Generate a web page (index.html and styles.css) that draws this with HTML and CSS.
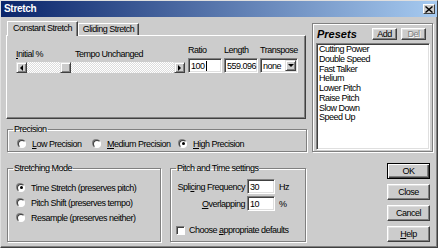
FILE: index.html
```html
<!DOCTYPE html>
<html lang="en">
<head>
	<meta charset="utf-8">
	<title>Stretch</title>
	<link rel="stylesheet" href="styles.css">
</head>
<body>

<!-- dialog window -->
<div class="window">
  <div class="titlebar">
    <span class="title">Stretch</span>
    <span class="close">
      <svg width="8" height="7" viewBox="0 0 8 7"><path d="M0.5 0.5 L7.5 6.5 M7.5 0.5 L0.5 6.5" stroke="#000" stroke-width="1.4" fill="none"/></svg>
    </span>
  </div>

  <div class="content">

    <!-- left column: tabs and precision -->
    <div class="left">
      <div class="tabs">
        <div class="tab active">Constant Stretch</div>
        <div class="tab">Gliding Stretch</div>
      </div>
      <div class="tabpanel">
        <div class="slider-block">
          <div class="slider-labels">
            <span class="initial"><u>I</u>nitial %</span>
            <span>Tempo Unchanged</span>
          </div>
          <div class="slider">
            <span class="sbtn"><i class="arrow arrow-left"></i></span>
            <span class="track"><span class="thumb"></span></span>
            <span class="sbtn"><i class="arrow arrow-right"></i></span>
          </div>
        </div>
        <div class="field field-ratio">
          <div class="field-label">Ratio</div>
          <div class="edit">100<span class="caret"></span></div>
        </div>
        <div class="field field-length">
          <div class="field-label">Length</div>
          <div class="edit">559.096</div>
        </div>
        <div class="field field-transpose">
          <div class="field-label">Transpose</div>
          <div class="edit combo">none<span class="combo-btn"><i class="arrow arrow-down"></i></span></div>
        </div>
      </div>

      <fieldset class="group precision">
        <legend>Precision</legend>
        <div class="radio-row">
          <span class="option opt-low"><span class="radio"></span><span><u>L</u>ow Precision</span></span>
          <span class="option opt-medium"><span class="radio"></span><span><u>M</u>edium Precision</span></span>
          <span class="option"><span class="radio checked"></span><span><u>H</u>igh Precision</span></span>
        </div>
      </fieldset>
    </div>

    <!-- right column: presets -->
    <div class="presets">
      <div class="presets-head">
        <span class="presets-title">Presets</span>
        <span class="btn small">Add</span>
        <span class="btn small disabled">Del</span>
      </div>
      <div class="listbox">
        <div>Cutting Power</div>
        <div>Double Speed</div>
        <div>Fast Talker</div>
        <div>Helium</div>
        <div>Lower Pitch</div>
        <div>Raise Pitch</div>
        <div>Slow Down</div>
        <div>Speed Up</div>
      </div>
    </div>

    <!-- bottom groups -->
    <div class="bottom">
      <fieldset class="group mode">
        <legend>Stretching Mode</legend>
        <div class="group-body">
          <div class="option"><span class="radio checked"></span><span>Time Stretch (preserves pitch)</span></div>
          <div class="option"><span class="radio"></span><span>Pitch Shift (preserves tempo)</span></div>
          <div class="option"><span class="radio"></span><span>Resample (preserves neither)</span></div>
        </div>
      </fieldset>

      <fieldset class="group pitch">
        <legend>Pitch and Time settings</legend>
        <div class="group-body">
          <div class="setting">
            <span class="setting-label">Spli<u>c</u>ing Frequency</span>
            <span class="edit small-edit">30</span>
            <span>Hz</span>
          </div>
          <div class="setting">
            <span class="setting-label"><u>O</u>verlapping</span>
            <span class="edit small-edit">10</span>
            <span>%</span>
          </div>
          <div class="check-row">
            <span class="checkbox"></span><span>Choose <u>a</u>ppropriate defaults</span>
          </div>
        </div>
      </fieldset>
    </div>

    <!-- dialog buttons -->
    <div class="buttons">
      <span class="btn default">OK</span>
      <span class="btn">Close</span>
      <span class="btn">Cancel</span>
      <span class="btn"><span><u>H</u>elp</span></span>
    </div>

  </div>
</div>

</body>
</html>
```

FILE: styles.css
```css
body {
  margin: 0;
  background: #fff;
  font-family: "Liberation Sans", Arial, sans-serif;
  font-size: 9px;
  letter-spacing: -0.5px;
  line-height: 10px;
  color: #000;
  white-space: nowrap;
}

.window {
  width: 438px;
  height: 248px;
  box-sizing: border-box;
  background: #cccccc;
  border: 1px solid;
  border-color: #dfdfdf #404040 #404040 #dfdfdf;
  box-shadow: inset -1px -1px #808080;
}

/* title bar */
.titlebar {
  height: 16px;
  display: flex;
  align-items: center;
  justify-content: space-between;
  padding: 0 2px 0 3px;
  background: linear-gradient(to right, #0a246a, #a6caf0);
  color: #fff;
  font-size: 10px;
  font-weight: bold;
  letter-spacing: -0.3px;
}

.close {
  width: 12px;
  height: 10px;
  box-sizing: border-box;
  display: flex;
  align-items: center;
  justify-content: center;
  background: #cccccc;
  border: 1px solid;
  border-color: #fff #404040 #404040 #fff;
}

/* main grid */
.content {
  display: grid;
  grid-template-columns: 300px 121px;
  grid-template-rows: 131px 79px;
  column-gap: 6px;
  row-gap: 11px;
  padding: 4px 0 0 5px;
}

.left {
  display: flex;
  flex-direction: column;
}

/* tabs */
.tabs {
  display: flex;
  align-items: flex-end;
  height: 14px;
  padding-left: 1px;
}

.tab {
  box-sizing: border-box;
  height: 12px;
  width: 61px;
  text-align: center;
  line-height: 11px;
  border: 1px solid;
  border-bottom: none;
  border-color: #fff #404040 #404040 #fff;
  box-shadow: inset -1px 0 #808080;
}

.tab.active {
  position: relative;
  z-index: 1;
  width: 71px;
  height: 15px;
  margin-bottom: -1px;
  background: #cccccc;
  line-height: 13px;
}

.tabpanel {
  box-sizing: border-box;
  height: 85px;
  display: flex;
  align-items: flex-start;
  padding: 9px 0 0 9px;
  border: 1px solid;
  border-color: #fff #404040 #404040 #fff;
  box-shadow: inset -1px -1px #808080;
}

/* slider */
.slider-block {
  width: 169px;
  margin-top: 4px;
  margin-right: 3px;
}

.slider-labels {
  display: flex;
}

.initial {
  width: 59px;
}

.slider {
  display: flex;
  height: 11px;
  margin-top: 3px;
}

.sbtn, .thumb, .combo-btn {
  box-sizing: border-box;
  width: 11px;
  height: 11px;
  display: flex;
  align-items: center;
  justify-content: center;
  background: #cccccc;
  border: 1px solid;
  border-color: #dfdfdf #404040 #404040 #dfdfdf;
  box-shadow: inset 1px 1px #fff, inset -1px -1px #808080;
}

.track {
  flex: 1;
  padding-left: 33px;
  background: repeating-conic-gradient(#ffffff 0 25%, #dcdcdc 0 50%) 0 0 / 2px 2px;
}

.thumb {
  display: block;
}

.arrow {
  width: 0;
  height: 0;
  border: 3px solid transparent;
}

.arrow-left {
  border-right-color: #000;
  border-left-width: 0;
}

.arrow-right {
  border-left-color: #000;
  border-right-width: 0;
}

.arrow-down {
  border-top-color: #000;
  border-bottom-width: 0;
}

/* edit fields */
.field {
  margin-right: 2px;
}

.field-label {
  height: 10px;
  margin-bottom: 3px;
}

.edit {
  box-sizing: border-box;
  display: flex;
  align-items: center;
  width: 34px;
  height: 15px;
  padding-left: 2px;
  background: #fff;
  border: 1px solid;
  border-color: #808080 #fff #fff #808080;
  box-shadow: inset 1px 1px #404040, inset -1px -1px #dfdfdf;
}

.caret {
  width: 1px;
  height: 10px;
  margin-left: 1px;
  background: #000;
}

.field-transpose .edit {
  width: 38px;
}

.combo {
  justify-content: space-between;
  padding-right: 1px;
}

/* group boxes */
.group {
  box-sizing: border-box;
  margin: 0;
  padding: 0;
  min-width: 0;
  border: 1px solid #808080;
  box-shadow: 1px 1px #fff, inset 1px 1px #fff;
}

.group legend {
  padding: 0 1px;
  margin-left: 5px;
  line-height: 10px;
}

.precision {
  flex: 1;
  width: 300px;
  margin: 5px 0 0 1px;
}

.radio-row {
  display: flex;
  padding: 2px 0 0 10px;
}

.option {
  display: flex;
  align-items: center;
  height: 15px;
}

.opt-low {
  width: 75px;
}

.opt-medium {
  width: 86px;
}

.radio {
  box-sizing: border-box;
  width: 8px;
  height: 8px;
  margin-right: 6px;
  border-radius: 50%;
  background: #fff;
  border: 1px solid;
  border-color: #404040 #fff #fff #404040;
  box-shadow: -1px -1px 0 #808080;
  display: flex;
  align-items: center;
  justify-content: center;
}

.radio.checked::after {
  content: "";
  width: 3px;
  height: 3px;
  border-radius: 50%;
  background: #000;
}

/* presets */
.presets {
  box-sizing: border-box;
  height: 129px;
  margin-top: 2px;
  padding: 2px 2px 1px 3px;
  display: flex;
  flex-direction: column;
  border: 1px solid #808080;
  box-shadow: 1px 1px #fff, inset 1px 1px #fff;
}

.presets-head {
  display: flex;
  align-items: center;
  height: 12px;
  margin: 2px 0 3px;
  padding-right: 4px;
}

.presets-title {
  flex: 1;
  padding-left: 1px;
  font-size: 11px;
  font-weight: bold;
  font-style: italic;
  letter-spacing: 0;
}

.btn {
  box-sizing: border-box;
  display: flex;
  align-items: center;
  justify-content: center;
  width: 43px;
  height: 16px;
  background: #cccccc;
  border: 1px solid;
  border-color: #fff #404040 #404040 #fff;
  box-shadow: inset -1px -1px #808080, inset 1px 1px #dfdfdf;
}

.btn.small {
  width: 25px;
  height: 12px;
  margin-left: 4px;
}

.btn.disabled {
  color: #808080;
  text-shadow: 1px 1px #fff;
}

.btn.default {
  border-color: #000;
  box-shadow: inset 1px 1px #fff, inset -1px -1px #404040, inset -2px -2px #808080;
}

.listbox {
  flex: 1;
  padding: 1px 0 0 1px;
  line-height: 9.75px;
  background: #fff;
  border: 1px solid;
  border-color: #808080 #fff #fff #808080;
  box-shadow: inset 1px 1px #404040, inset -1px -1px #dfdfdf;
}

.listbox div {
  padding-left: 1px;
}

/* bottom row */
.bottom {
  display: flex;
  gap: 9px;
  padding-left: 1px;
}

.mode {
  width: 155px;
}

.mode .group-body {
  padding: 7px 0 0 9px;
}

.pitch {
  width: 137px;
}

.pitch .group-body {
  padding: 6px 0 0 5px;
}

.setting {
  display: flex;
  align-items: center;
  height: 15px;
  margin-bottom: 2px;
}

.setting-label {
  width: 69px;
  margin-right: 2px;
  text-align: right;
}

.small-edit {
  width: 28px;
  margin-right: 4px;
}

.check-row {
  display: flex;
  align-items: center;
  margin-top: 14px;
}

.checkbox {
  box-sizing: border-box;
  width: 9px;
  height: 9px;
  margin-right: 4px;
  background: #fff;
  border: 1px solid;
  border-color: #808080 #fff #fff #808080;
  box-shadow: inset 1px 1px #404040;
}

/* dialog buttons */
.buttons {
  display: flex;
  flex-direction: column;
  align-items: flex-end;
  gap: 5px;
  padding-right: 3px;
}
```
